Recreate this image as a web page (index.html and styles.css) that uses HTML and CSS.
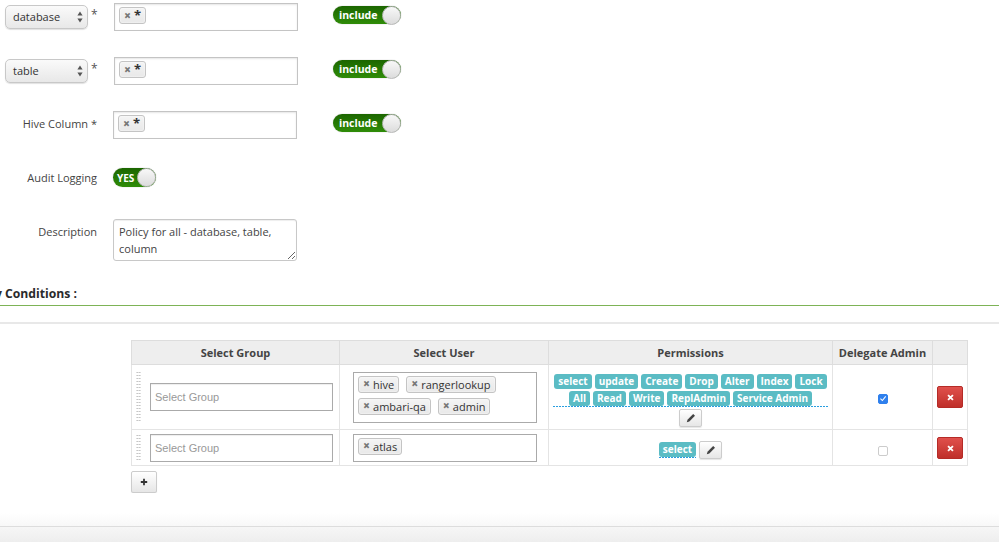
FILE: index.html
```html
<!DOCTYPE html>
<html lang="en">
<head>
<meta charset="utf-8">
<title>Policy</title>
<link rel="stylesheet" href="styles.css">
</head>
<body>
<main class="page">
  <form class="form">
    <div class="row row-first">
      <div class="label-col">
        <div class="select"><span class="select-text">database</span><svg class="arrows" viewBox="0 0 6 12" width="6" height="12"><path d="M3 0.5 L5.6 4.5 H0.4 Z M3 11.5 L5.6 7.5 H0.4 Z" fill="#555"/></svg></div>
        <span class="star">*</span>
      </div>
      <div class="tagbox tagbox-shift"><span class="chip"><i class="x">×</i><b class="asterisk">*</b></span></div>
      <div class="toggle"><span class="toggle-text">include</span><span class="knob"></span></div>
    </div>
    <div class="row">
      <div class="label-col">
        <div class="select"><span class="select-text">table</span><svg class="arrows" viewBox="0 0 6 12" width="6" height="12"><path d="M3 0.5 L5.6 4.5 H0.4 Z M3 11.5 L5.6 7.5 H0.4 Z" fill="#555"/></svg></div>
        <span class="star">*</span>
      </div>
      <div class="tagbox tagbox-shift"><span class="chip"><i class="x">×</i><b class="asterisk">*</b></span></div>
      <div class="toggle"><span class="toggle-text">include</span><span class="knob"></span></div>
    </div>
    <div class="row">
      <label class="label-col label">Hive Column *</label>
      <div class="tagbox"><span class="chip"><i class="x">×</i><b class="asterisk">*</b></span></div>
      <div class="toggle toggle-third"><span class="toggle-text">include</span><span class="knob"></span></div>
    </div>
    <div class="row row-audit">
      <label class="label-col label">Audit Logging</label>
      <div class="toggle toggle-small"><span class="toggle-text">YES</span><span class="knob"></span></div>
    </div>
    <div class="row row-desc">
      <label class="label-col label label-desc">Description</label>
      <textarea class="desc" readonly>Policy for all - database, table, column</textarea>
    </div>
  </form>

  <h2 class="heading">Policy Conditions :</h2>
  <div class="rule"></div>

  <section class="conditions">
    <table class="table">
      <colgroup>
        <col class="c1"><col class="c2"><col class="c3"><col class="c4"><col class="c5">
      </colgroup>
      <thead>
        <tr>
          <th>Select Group</th><th>Select User</th><th>Permissions</th><th>Delegate Admin</th><th></th>
        </tr>
      </thead>
      <tbody>
        <tr class="tall">
          <td class="group-cell">
            <div class="group"><span class="handle"></span><div class="ginput">Select Group</div></div>
          </td>
          <td class="user-cell">
            <div class="userbox">
              <span class="chip chip-user"><i class="x">×</i>hive</span>
              <span class="chip chip-user"><i class="x">×</i>rangerlookup</span>
              <span class="chip chip-user"><i class="x">×</i>ambari-qa</span>
              <span class="chip chip-user"><i class="x">×</i>admin</span>
            </div>
          </td>
          <td class="perm-cell">
            <div class="perms perms-wide">
              <span class="tag">select</span><span class="tag">update</span><span class="tag">Create</span><span class="tag">Drop</span><span class="tag">Alter</span><span class="tag">Index</span><span class="tag">Lock</span><span class="tag">All</span><span class="tag">Read</span><span class="tag">Write</span><span class="tag">ReplAdmin</span><span class="tag">Service Admin</span>
            </div>
            <button type="button" class="btn btn-edit"><svg viewBox="0 0 12 12" width="10" height="10"><path d="M8.6 1.2 L10.8 3.4 L4 10.2 L1 11 L1.8 8 Z" fill="#444"/></svg></button>
          </td>
          <td class="check-cell"><span class="check check-on"><svg viewBox="0 0 10 10" width="9" height="9"><path d="M1.8 5.2 L4.2 7.6 L8.4 2.4" fill="none" stroke="#fff" stroke-width="1.3"/></svg></span></td>
          <td class="del-cell"><button type="button" class="btn-del"><svg viewBox="0 0 10 10" width="7" height="7"><path d="M1.5 1.5 L8.5 8.5 M8.5 1.5 L1.5 8.5" stroke="#fff" stroke-width="2.6"/></svg></button></td>
        </tr>
        <tr class="short">
          <td class="group-cell">
            <div class="group group-short"><span class="handle"></span><div class="ginput">Select Group</div></div>
          </td>
          <td class="user-cell">
            <div class="userbox userbox-short"><span class="chip chip-user"><i class="x">×</i>atlas</span></div>
          </td>
          <td class="perm-cell perm-cell-short">
            <div class="perm-inline">
              <div class="perms"><span class="tag">select</span></div>
              <button type="button" class="btn btn-edit"><svg viewBox="0 0 12 12" width="10" height="10"><path d="M8.6 1.2 L10.8 3.4 L4 10.2 L1 11 L1.8 8 Z" fill="#444"/></svg></button>
            </div>
          </td>
          <td class="check-cell check-cell-short"><span class="check"></span></td>
          <td class="del-cell del-cell-short"><button type="button" class="btn-del"><svg viewBox="0 0 10 10" width="7" height="7"><path d="M1.5 1.5 L8.5 8.5 M8.5 1.5 L1.5 8.5" stroke="#fff" stroke-width="2.6"/></svg></button></td>
        </tr>
      </tbody>
    </table>
    <button type="button" class="btn btn-add"><svg viewBox="0 0 10 10" width="8" height="8"><path d="M5 1 V9 M1 5 H9" stroke="#333" stroke-width="2.2"/></svg></button>
  </section>
  <div class="fade"></div>
  <footer class="footer"></footer>
</main>
</body>
</html>
```

FILE: styles.css
```css
* { box-sizing: border-box; }
html, body { margin: 0; padding: 0; }
body {
  font-family: "Open Sans", "Liberation Sans", sans-serif;
  font-size: 11px;
  color: #444;
  background: #fff;
  height: 542px;
  overflow: hidden;
}
.page { width: 999px; height: 542px; overflow: hidden; display: flex; flex-direction: column; }

.form { display: flex; flex-direction: column; padding-top: 3px; }
.row { display: flex; align-items: flex-start; margin-top: 26px; }
.row-first { margin-top: 0; }
.row-audit { margin-top: 29px; align-items: center; height: 19px; }
.row-desc { margin-top: 32px; }

.label-col { width: 97px; margin-right: 16px; display: flex; align-items: flex-start; flex: none; }
.label { justify-content: flex-end; font-size: 11px; color: #444; line-height: 26px; }
.row-audit .label { line-height: 19px; }
.label-desc { line-height: 26px; }

.select {
  width: 83px; height: 24px; margin: 2px 0 0 5px;
  display: flex; align-items: center; justify-content: space-between;
  padding: 0 4px 0 7px;
  border: 1px solid #c8c8c8; border-radius: 5px;
  background: linear-gradient(#fafafa, #e8e8e8);
  box-shadow: 0 1px 1px rgba(0,0,0,.12);
  font-size: 11px; color: #333;
}
.select-text { padding-bottom: 2px; }
.arrows { flex: none; }
.star { margin: 3px 0 0 3px; width: 6px; font-size: 12px; color: #555; }

.tagbox {
  width: 184px; height: 28px; flex: none;
  border: 1px solid #c4c4c4; padding: 3px 4px;
  box-shadow: inset 0 1px 2px rgba(0,0,0,.1);
  background: #fff;
}
.tagbox-shift { margin-left: 1px; }
.chip {
  display: inline-flex; align-items: center; height: 17px; padding: 0 4px;
  border: 1px solid #c4c4c4; border-radius: 3px;
  background: linear-gradient(#f4f4f4, #e8e8e8);
  color: #333; font-size: 11px;
  box-shadow: 0 0 2px #fff inset;
}
.x { font-style: normal; font-weight: 800; color: #777; font-size: 12px; margin-right: 3px; line-height: 1; }
.asterisk { font-weight: 700; font-size: 13px; color: #333; line-height: 13px; }

.toggle {
  width: 68px; height: 18px; margin: 3px 0 0 35px; flex: none;
  display: flex; align-items: center; justify-content: space-between;
  border-radius: 10px;
  background: linear-gradient(#1c6600, #2f8c08);
  box-shadow: 0 0 1px rgba(0,0,0,.4);
  color: #fff; font-weight: 700; font-size: 10.5px;
  padding-left: 6px;
}
.toggle-text { line-height: 18px; }
.toggle-third { margin-left: 36px; }
.knob {
  width: 19px; height: 19px; border-radius: 50%; flex: none;
  background: linear-gradient(#f8f8f8, #dcdcdc);
  border: 1px solid #bbb;
}
.toggle-small { width: 43px; height: 19px; margin: 0; padding-left: 4px; font-size: 10px; }

.desc {
  display: block; width: 184px; height: 42px; resize: both;
  border: 1px solid #c8c8c8; border-radius: 3px;
  padding: 3px 5px 0; margin: 0;
  font-family: inherit; font-size: 11px; line-height: 17px; color: #444;
  outline: none; overflow: hidden;
  box-shadow: inset 0 1px 1px rgba(0,0,0,.07);
}

.heading {
  margin: 24px 0 0 -34px; font-size: 12.2px; font-weight: 700; color: #2b2b2b;
  line-height: 18px; white-space: nowrap;
}
.rule { margin-top: 2px; height: 19px; border-top: 1px solid #7db356; border-bottom: 2px solid #e8e8e8; flex: none; }

.conditions { padding: 16px 0 0 131px; flex: none; }
.table { width: 836px; table-layout: fixed; border-collapse: collapse; }
.c1 { width: 208px; } .c2 { width: 209px; } .c3 { width: 284px; } .c4 { width: 100px; } .c5 { width: 35px; }
.table th {
  height: 24px; background: #eee; border: 1px solid #ddd;
  font-size: 11px; font-weight: 700; color: #444; text-align: center; padding: 0;
}
.table td { border: 1px solid #e4e4e4; padding: 0; text-align: center; vertical-align: middle; }
.tall { height: 64px; }
.short { height: 36px; }

.group { display: flex; align-items: center; padding: 0 6px 0 4px; height: 63px; }
.group-short { height: 34px; }
.handle {
  width: 5px; height: 52px; margin-right: 9px; flex: none;
  background-image: radial-gradient(circle, #bbb 40%, transparent 45%);
  background-size: 2.5px 3px;
}
.group-short .handle { height: 28px; }
.ginput {
  width: 184px; height: 28px; border: 1px solid #aaa; padding-left: 4px;
  text-align: left; line-height: 26px; color: #999; background: #fff;
  font-family: "Liberation Sans", Arial, sans-serif; font-size: 11px;
  box-shadow: inset 0 1px 1px rgba(0,0,0,.07);
}
.userbox {
  width: 184px; height: 51px; margin: 0 auto 0 13px; padding: 3px 4px; text-align: left;
  border: 1px solid #aaa; display: flex; flex-wrap: wrap; gap: 5px 7px; align-content: flex-start;
}
.userbox-short { height: 28px; }
.chip-user { height: 17px; padding: 0 4px; }

.perm-cell { padding: 0; }
.table .perm-cell { padding: 9px 0 2px; vertical-align: top; }
.table .perm-cell-short { padding: 11px 0 0; }
.perms {
  display: flex; flex-wrap: wrap; justify-content: center; gap: 2px 3px; padding-bottom: 1px;
  background: repeating-linear-gradient(90deg, #2a9fe0 0 2px, transparent 2px 3px) left bottom / 100% 1px no-repeat;
}
.perms-wide { margin: 0 4px; }
.tag {
  display: inline-block; height: 15px; line-height: 15px; padding: 0 4px;
  background: #5bbcc4; color: #fff; font-size: 10px; font-weight: 700; border-radius: 3px;
}
.perm-inline { display: flex; justify-content: center; align-items: center; gap: 3px; }
.btn {
  display: inline-flex; align-items: center; justify-content: center; padding: 0;
  border: 1px solid #ccc; border-radius: 2px;
  background: linear-gradient(#fff, #e6e6e6);
  box-shadow: 0 1px 1px rgba(0,0,0,.1);
}
.btn-edit { width: 23px; height: 18px; margin-top: 2px; vertical-align: top; }
.perm-inline .btn-edit { margin-top: 0; }
.check {
  display: inline-flex; align-items: center; justify-content: center; vertical-align: middle;
  width: 10px; height: 10px; border: 1px solid #ccc; border-radius: 2px; background: #fff;
}
.check-on { border-color: #2f80ed; background: #2f80ed; }
.table .check-cell-short { padding-top: 3px; }
.table .del-cell-short { padding-top: 1px; }
.btn-del {
  display: inline-flex; align-items: center; justify-content: center; padding: 0;
  width: 26px; height: 22px; border: 1px solid #b52b27; border-radius: 2px;
  background: linear-gradient(#e0504c, #bf2f2a); vertical-align: middle;
}
.btn-add { display: flex; width: 26px; height: 22px; margin-top: 5px; }

.fade { flex: 1; background: linear-gradient(#fff 60%, #f8f8f8); }
.footer { height: 16px; flex: none; border-top: 1px solid #ddd; background: linear-gradient(#f6f6f6, #eee); }
```
